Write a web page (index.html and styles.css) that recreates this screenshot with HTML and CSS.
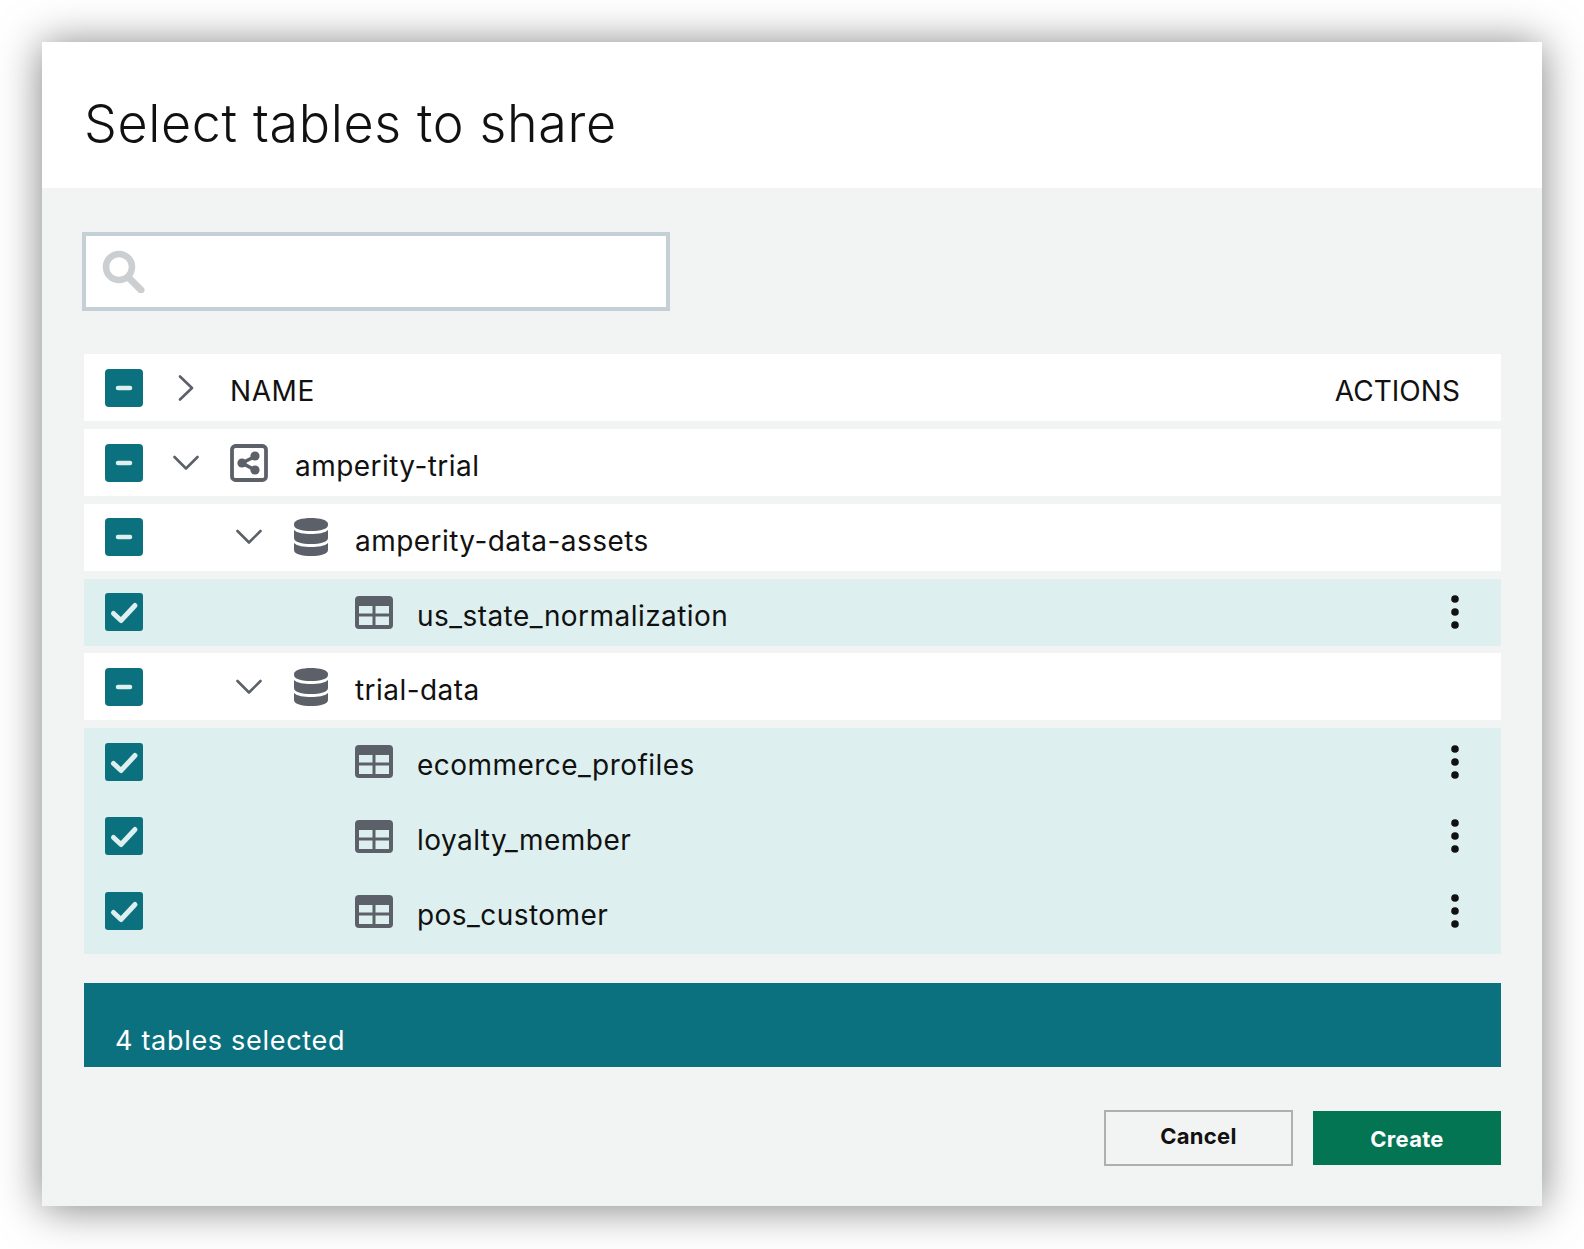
FILE: index.html
```html
<!DOCTYPE html>
<html lang="en">
<head>
<meta charset="utf-8">
<title>Select tables to share</title>
<link rel="stylesheet" href="styles.css">
</head>
<body>
<svg class="defs" width="0" height="0" aria-hidden="true">
  <symbol id="minus" viewBox="0 0 38 38"><rect width="38" height="38" rx="4" fill="#0b717f"/><path d="M13 19h12" stroke="#ddf0ef" stroke-width="4.500" stroke-linecap="round"/></symbol>
  <symbol id="checked" viewBox="0 0 38 38"><rect width="38" height="38" rx="3" fill="#0b717f"/><path d="M8.500 20.500l7.500 7L30 12.500" fill="none" stroke="#ddf0ef" stroke-width="5" stroke-linecap="round" stroke-linejoin="round"/></symbol>
  <symbol id="down" viewBox="0 0 26 16"><path d="M1.500 2l11.500 11.500L24.500 2" fill="none" stroke="#5c6068" stroke-width="2.600" stroke-linecap="round" stroke-linejoin="round"/></symbol>
  <symbol id="right" viewBox="0 0 16 26"><path d="M2 1.500L14 13 2 24.500" fill="none" stroke="#5c6068" stroke-width="2.600" stroke-linecap="round" stroke-linejoin="round"/></symbol>
  <symbol id="share" viewBox="0 0 38 38"><rect x="2" y="2" width="34" height="34" rx="3.500" fill="none" stroke="#5c6068" stroke-width="3.800"/><path d="M25 12.500L12 19l13 7" fill="none" stroke="#5c6068" stroke-width="3.600"/><circle cx="25" cy="12" r="4.600" fill="#5c6068"/><circle cx="12" cy="19" r="4.600" fill="#5c6068"/><circle cx="25" cy="26" r="4.600" fill="#5c6068"/></symbol>
  <symbol id="db" viewBox="0 0 34 38"><path d="M0 6C0 2 8 0 17 0s17 2 17 6v1c0 4-8 6-17 6S0 11 0 7z" fill="#5c6068"/><path d="M0 12c3 3 10 4 17 4s14-1 17-4v8c0 4-8 6-17 6S0 24 0 20z" fill="#5c6068"/><path d="M0 25c3 3 10 4 17 4s14-1 17-4v7c0 4-8 6-17 6S0 36 0 32z" fill="#5c6068"/></symbol>
  <symbol id="table" viewBox="0 0 38 33"><rect width="38" height="33" rx="4" fill="#5c6068"/><rect x="4" y="10" width="13.500" height="7.500" fill="#ddf0ef"/><rect x="20.500" y="10" width="13.500" height="7.500" fill="#ddf0ef"/><rect x="4" y="20.500" width="13.500" height="8.500" fill="#ddf0ef"/><rect x="20.500" y="20.500" width="13.500" height="8.500" fill="#ddf0ef"/></symbol>
  <symbol id="dots" viewBox="0 0 8 34"><circle cx="4" cy="4" r="3.800" fill="#111"/><circle cx="4" cy="17" r="3.800" fill="#111"/><circle cx="4" cy="30" r="3.800" fill="#111"/></symbol>
</svg>

<main class="modal">
  <header class="modal-head">
    <h1 class="title">Select tables to share</h1>
  </header>

  <section class="modal-body">
    <div class="search">
      <svg class="search-icon" viewBox="0 0 43 43"><circle cx="17" cy="17" r="13" fill="none" stroke="#cccfd1" stroke-width="6.500"/><path d="M27 28l12 12" stroke="#cccfd1" stroke-width="7" stroke-linecap="round"/></svg>
    </div>

    <div class="tree">
      <div class="row">
        <svg class="check"><use href="#minus"/></svg>
        <span class="chev"><svg class="chev-right"><use href="#right"/></svg></span>
        <span class="label head-name">NAME</span>
        <span class="label head-actions">ACTIONS</span>
      </div>
      <div class="row">
        <svg class="check"><use href="#minus"/></svg>
        <span class="chev"><svg class="chev-down"><use href="#down"/></svg></span>
        <svg class="icon"><use href="#share"/></svg>
        <span class="label">amperity-trial</span>
      </div>
      <div class="row">
        <svg class="check"><use href="#minus"/></svg>
        <span class="chev lvl1"><svg class="chev-down"><use href="#down"/></svg></span>
        <svg class="icon db"><use href="#db"/></svg>
        <span class="label">amperity-data-assets</span>
      </div>
      <div class="row selected">
        <svg class="check"><use href="#checked"/></svg>
        <svg class="icon tbl"><use href="#table"/></svg>
        <span class="label">us_state_normalization</span>
        <svg class="dots"><use href="#dots"/></svg>
      </div>
      <div class="row">
        <svg class="check"><use href="#minus"/></svg>
        <span class="chev lvl1"><svg class="chev-down"><use href="#down"/></svg></span>
        <svg class="icon db"><use href="#db"/></svg>
        <span class="label">trial-data</span>
      </div>
      <div class="group">
        <div class="row selected">
          <svg class="check"><use href="#checked"/></svg>
          <svg class="icon tbl"><use href="#table"/></svg>
          <span class="label">ecommerce_profiles</span>
          <svg class="dots"><use href="#dots"/></svg>
        </div>
        <div class="row selected">
          <svg class="check"><use href="#checked"/></svg>
          <svg class="icon tbl"><use href="#table"/></svg>
          <span class="label">loyalty_member</span>
          <svg class="dots"><use href="#dots"/></svg>
        </div>
        <div class="row selected">
          <svg class="check"><use href="#checked"/></svg>
          <svg class="icon tbl"><use href="#table"/></svg>
          <span class="label">pos_customer</span>
          <svg class="dots"><use href="#dots"/></svg>
        </div>
      </div>
    </div>

    <div class="summary">4 tables selected</div>

    <div class="actions">
      <button class="btn btn-cancel" type="button">Cancel</button>
      <button class="btn btn-create" type="button">Create</button>
    </div>
  </section>
</main>
</body>
</html>
```

FILE: styles.css
```css
* { box-sizing: border-box; }

html, body { margin: 0; background: #fff; }

body {
  height: 1249px;
  padding: 42px;
  overflow: hidden;
  font-family: Inter, "Liberation Sans", sans-serif;
  color: #111;
}

.defs { position: absolute; }

.modal {
  width: 1500px;
  height: 1164px;
  background: #f2f4f3;
  box-shadow: 0 2px 40px rgba(0, 0, 0, .5);
}

.modal-head {
  height: 146px;
  padding: 16px 42px 0;
  background: #fff;
  display: flex;
  align-items: center;
}

.title {
  margin: 0;
  font-size: 52px;
  font-weight: 300;
  letter-spacing: .65px;
  color: #111;
}

.modal-body { padding: 44px 41px 0 42px; }

.search {
  width: 588px;
  height: 79px;
  margin-left: -2px;
  background: #fff;
  border: 4px solid #c5d0d6;
  padding: 14px 0 0 16px;
}

.search-icon { display: block; width: 43px; height: 43px; }

.tree {
  margin-top: 43.4px;
  display: flex;
  flex-direction: column;
  gap: 7.75px;
}

.group {
  padding-bottom: 9px;
  background: #ddf0ef;
  display: flex;
  flex-direction: column;
  gap: 7.75px;
}

.row {
  height: 67px;
  padding: 0 41px 0 21px;
  background: #fff;
  display: flex;
  align-items: center;
  flex: none;
}

.row.selected { background: #ddf0ef; }

.check { width: 38px; height: 38px; margin-right: 24px; flex: none; }

.chev {
  width: 38px;
  margin-right: 25px;
  display: flex;
  justify-content: center;
  flex: none;
}
.chev.lvl1 { margin-left: 63px; }
.chev-down { width: 26px; height: 16px; display: block; }
.chev-right { width: 16px; height: 26px; display: block; }

.icon { width: 38px; height: 38px; margin-right: 27px; flex: none; }
.icon.db { width: 34px; margin-left: 1px; margin-right: 27px; }
.icon.tbl { height: 33px; margin-left: 188px; margin-right: 24px; }

.label {
  font-size: 28px;
  line-height: 34px;
  letter-spacing: .45px;
  padding-top: 7px;
  white-space: nowrap;
}

.head-name { letter-spacing: .6px; }
.head-actions { letter-spacing: .05px; margin-left: auto; }

.dots { width: 8px; height: 34px; margin-left: auto; margin-right: 1px; flex: none; }

.summary {
  margin-top: 29.35px;
  height: 84px;
  padding: 41px 0 0 31px;
  background: #0b717f;
  color: #fff;
  font-size: 27px;
  line-height: 34px;
  letter-spacing: .7px;
}

.actions {
  margin-top: 43px;
  display: flex;
  justify-content: flex-end;
  align-items: center;
  gap: 20px;
}

.btn {
  font-family: inherit;
  font-size: 22px;
  font-weight: 700;
  letter-spacing: .3px;
  border-radius: 0;
  padding: 0;
}

.btn-cancel {
  width: 189px;
  height: 56px;
  background: #f2f4f3;
  border: 2px solid #aeb0ae;
  color: #111;
  padding-bottom: 3px;
}

.btn-create {
  width: 188px;
  height: 54px;
  background: #047553;
  border: 0;
  color: #fff;
  padding-top: 3px;
}
```
